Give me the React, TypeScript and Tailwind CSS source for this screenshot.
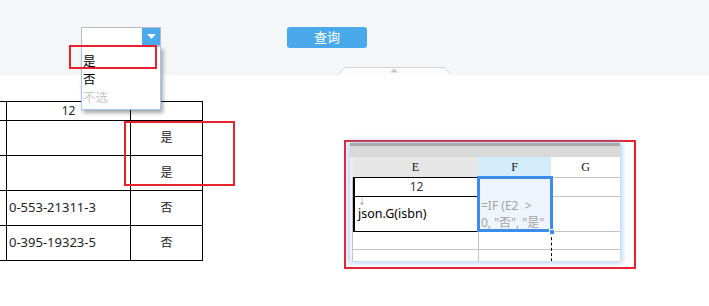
const font = "font-['Noto_Sans','Noto_Sans_CJK_SC',sans-serif]";

function SelectBox() {
  return (
    <div className="relative z-20">
      <div className="flex h-[19px] w-[80px] border border-[#b9bcc4] bg-white">
        <div className="flex-1" />
        <div className="flex w-[18px] items-center justify-center bg-[#4aa8ec]">
          <svg width="9" height="5" viewBox="0 0 9 5">
            <path d="M0 0h9L4.5 5z" fill="#fff" />
          </svg>
        </div>
      </div>
      <div className="absolute left-0 top-[19px] w-[80px] border border-[#a6c6ee] bg-white pt-[6px] pb-[2px] text-[12.5px] shadow-[2px_3px_4px_rgba(0,0,0,0.35)]">
        <div className="h-[18px] pl-[1px] leading-[18px] text-black">是</div>
        <div className="h-[18px] pl-[1px] leading-[18px] text-black">否</div>
        <div className="h-[18px] pl-[1px] leading-[18px] text-[#c8c8c8]">不选</div>
      </div>
      <div className="absolute left-[-12px] top-[18px] h-[24px] w-[88px] border-2 border-[#e8232d]" />
    </div>
  );
}

function LeftTable() {
  const rows = [
    { h: "h-[19px]", a: "12", b: "", center: true },
    { h: "h-[35px]", a: "", b: "是", center: false },
    { h: "h-[35px]", a: "", b: "是", center: false },
    { h: "h-[35px]", a: "0-553-21311-3", b: "否", center: false },
    { h: "h-[35px]", a: "0-395-19323-5", b: "否", center: false },
  ];
  return (
    <div className="mt-[26px] flex flex-col border-b border-black text-[12px] text-[#222]">
      {rows.map((r, i) => (
        <div key={i} className={`flex ${r.h}`}>
          <div className="w-[6px] border-t border-black" />
          <div
            className={`flex w-[124px] items-center border-t border-l border-black ${
              r.center ? "justify-center" : "pl-[2px] text-[13px]"
            }`}
          >
            {r.a}
          </div>
          <div className="flex w-[73px] items-center justify-center border-x border-t border-black">
            {r.b}
          </div>
        </div>
      ))}
    </div>
  );
}

function SheetPanel() {
  const gray = "border-[#c2c2c2]";
  return (
    <div className="mt-[65px] ml-[141px] h-[129px] w-[292px] border-2 border-[#e8232d] pl-[4px] pt-[1px]">
      <div className="relative h-[118px] w-[270px] overflow-hidden bg-white shadow-[0_0_6px_2px_rgba(80,150,235,0.45)]">
        <div className="h-[3px] bg-[#a9a9a9]" />
        <div className="h-[11px] bg-[#d9d9d9]" />
        <div className="flex h-[20px] font-['Liberation_Serif',serif] text-[12px] text-[#111]">
          <div className="w-[3px] bg-[#ececec]" />
          <div className="flex w-[125px] items-center justify-center bg-[#e6e6e6]">E</div>
          <div className="flex w-[73px] items-center justify-center bg-[#d3eefa]">F</div>
          <div className="flex w-[69px] items-center justify-center">G</div>
        </div>
        <div className="flex h-[19px]">
          <div className="w-[3px] border-r border-[#c2c2c2] bg-[#f2f2f2]" />
          <div className="flex w-[125px] items-center justify-center border-t border-l-2 border-black text-[12px] text-[#333]">
            12
          </div>
          <div className="w-[73px] bg-[#eef5fd]" />
          <div className={`w-[69px] border-t ${gray}`} />
        </div>
        <div className="flex h-[35px]">
          <div className="w-[3px] border-r border-[#c2c2c2] bg-[#f2f2f2]" />
          <div className="flex w-[125px] flex-col border-t border-l-2 border-black pl-[3px] text-black">
            <span className="h-[8px] text-[8px] leading-[8px] text-[#888]">↓</span>
            <span className="text-[12.5px] leading-[17px]">json.G(isbn)</span>
          </div>
          <div className="w-[73px] overflow-hidden whitespace-nowrap bg-[#eef5fd] pl-[3px] pt-[1px] text-[12px] leading-[17px] text-[#a3a3a3]">
            <div>=IF (E2 &nbsp;&gt;</div>
            <div>0, "否", "是"</div>
          </div>
          <div className={`w-[69px] border-t ${gray}`} />
        </div>
        <div className="flex h-[18px]">
          <div className="w-[3px] border-r border-[#c2c2c2] bg-[#f2f2f2]" />
          <div className="w-[125px] border-t border-black" />
          <div className={`w-[73px] border-t border-l ${gray}`} />
          <div className={`w-[69px] border-t ${gray}`} />
        </div>
        <div className="flex h-[20px]">
          <div className="w-[3px] border-r border-[#c2c2c2] bg-[#f2f2f2]" />
          <div className={`w-[125px] border-t ${gray}`} />
          <div className={`w-[73px] border-t border-l ${gray}`} />
          <div className={`w-[69px] border-t ${gray}`} />
        </div>
        <div className="absolute left-[127px] top-[33px] h-[56px] w-[76px] border-[3px] border-[#3d8bea]" />
        <div className="absolute left-[201px] top-[89px] h-[40px] border-l border-dashed border-black" />
        <div className="absolute left-[199px] top-[86px] h-[6px] w-[6px] border border-white bg-[#3d8bea]" />
      </div>
    </div>
  );
}

export default function App() {
  return (
    <div className={`relative h-[306px] w-[709px] overflow-hidden bg-white ${font}`}>
      <div className="relative h-[75px] bg-[#f5f6f8]">
        <div className="flex items-start pl-[81px] pt-[27px]">
          <SelectBox />
          <button
            type="button"
            className="ml-[126px] h-[21px] w-[80px] rounded-[3px] bg-[#4aa9ea] text-[13px] leading-[21px] text-white"
          >
            查询
          </button>
        </div>
        <svg
          className="absolute bottom-0 left-[337px]"
          width="115"
          height="8"
          viewBox="0 0 115 8"
        >
          <path d="M0.5 8L8 0.5H107L114.5 8" fill="#fcfcfc" stroke="#d4d4d4" />
          <path d="M53 5.5L57 1.5L61 5.5z" fill="#c9c9c9" />
        </svg>
      </div>
      <div className="relative flex items-start">
        <LeftTable />
        <SheetPanel />
        <div className="absolute left-[124px] top-[46px] h-[65px] w-[111px] border-2 border-[#e8232d]" />
      </div>
    </div>
  );
}
